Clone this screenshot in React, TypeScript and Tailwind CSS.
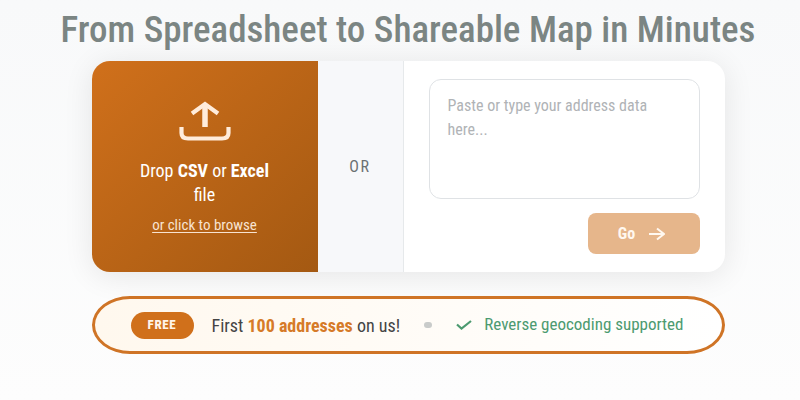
import { useRef, useState } from "react";

function UploadIcon() {
  return (
    <svg width="52" height="42" viewBox="0 0 52 42" fill="none" stroke="currentColor" strokeWidth="5" aria-hidden="true">
      <path d="M26 28V6" strokeWidth="5.500" />
      <path d="M13 14.500L26 5L39 14.500" strokeWidth="4.200" />
      <path d="M2.500 28V34Q2.500 39.500 9 39.500H43Q49.500 39.500 49.500 34V28" strokeWidth="4.200" />
    </svg>
  );
}

function ArrowIcon() {
  return (
    <svg width="16" height="14" viewBox="0 0 16 14" fill="none" stroke="currentColor" strokeWidth="2" aria-hidden="true">
      <path d="M0 7H15M8 1.500L15 7L8 12.500" />
    </svg>
  );
}

function CheckIcon() {
  return (
    <svg width="16" height="10" viewBox="0 0 16 10" fill="none" stroke="currentColor" strokeWidth="2.200" aria-hidden="true">
      <path d="M1 4.500L5.500 8.500L15 1" />
    </svg>
  );
}

function App() {
  const [text, setText] = useState("");
  const fileInput = useRef<HTMLInputElement>(null);

  return (
    <main className="min-h-screen bg-linear-to-b from-[#f8f9fa] to-[#fdfdfd] pt-2 pl-4 font-['Roboto_Condensed','Liberation_Sans_Narrow','Liberation_Sans',sans-serif]">
      <h1 className="text-center text-[37px] leading-[44px] font-medium text-[#7b8583]">
        From Spreadsheet to Shareable Map in Minutes
      </h1>

      <div className="mx-auto mt-[9px] w-full max-w-[633px]">
        <section className="flex overflow-hidden rounded-[18px] bg-white shadow-[0_4px_30px_rgba(0,0,0,0.09)]">
          <button
            type="button"
            onClick={() => fileInput.current?.click()}
            className="flex w-[226px] shrink-0 flex-col items-center justify-center bg-linear-to-br from-[#d0701b] to-[#a45912] px-[46px] pt-[2px] text-white"
          >
            <span className="text-[#ffecdb]">
              <UploadIcon />
            </span>
            <span className="mt-[18px] text-[18px] leading-6">
              Drop <strong>CSV</strong> or <strong>Excel</strong> file
            </span>
            <span className="mt-[6px] text-[15px] leading-6 text-[#f8e3d1] underline underline-offset-2">
              or click to browse
            </span>
          </button>
          <input ref={fileInput} type="file" accept=".csv,.xlsx,.xls" aria-label="Address file" className="hidden" />

          <div className="flex w-[86px] shrink-0 items-center justify-center border-r border-[#e6e9eb] bg-[#f7f8fa] text-[16px] tracking-widest text-[#6b7072]">
            OR
          </div>

          <div className="flex flex-1 flex-col items-end gap-[14px] px-[25px] pt-[18px] pb-[18px]">
            <textarea
              value={text}
              onChange={(e) => setText(e.target.value)}
              aria-label="Address data"
              placeholder="Paste or type your address data here..."
              className="h-[120px] w-full resize-none rounded-xl border border-[#dfe2e5] bg-white px-[18px] py-[14px] text-[16px] leading-6 text-[#444] outline-none placeholder:text-[#b0b3b6]"
            />
            <button
              type="submit"
              disabled={!text}
              className="flex h-[41px] w-28 items-center justify-center gap-[14px] rounded-lg bg-[#e6b68b] pr-1 text-[16px] font-bold text-[#fff8f0]"
            >
              Go
              <ArrowIcon />
            </button>
          </div>
        </section>

        <div className="mt-6 flex h-[58px] items-center rounded-[38px/29px] border-[3px] border-[#cf7426] bg-linear-to-r from-[#fff8ee] to-white pr-[38px] pl-9 whitespace-nowrap">
          <span className="flex h-[27px] w-[63px] items-center justify-center rounded-full bg-[#d0701b] text-[13px] font-extrabold tracking-wider text-[#fff5e9]">
            FREE
          </span>
          <p className="ml-[18px] text-[18px] text-[#444]">
            First <strong className="text-[#d67a28]">100 addresses</strong> on us!
          </p>
          <span className="mx-auto h-[6px] w-2 rounded-full bg-[#c9cbca]" />
          <p className="flex items-center gap-3 text-[17px] text-[#4c9a70]">
            <CheckIcon />
            Reverse geocoding supported
          </p>
        </div>
      </div>
    </main>
  );
}

export default App;
